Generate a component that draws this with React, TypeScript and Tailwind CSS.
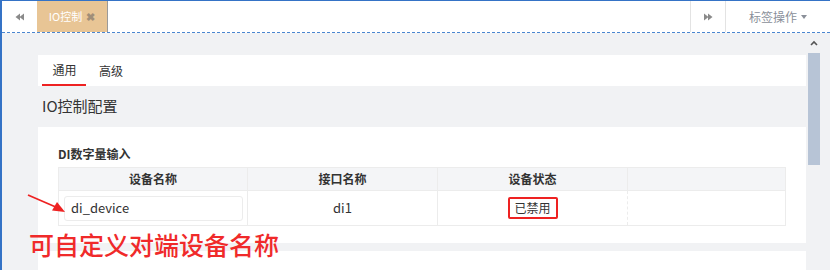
const cjk = { fontFamily: '"Noto Sans CJK SC", "Noto Sans", sans-serif' };

function BackwardIcon() {
  return (
    <svg width="10" height="8" viewBox="0 0 10 8">
      <path d="M0.5 4 L5 0.5 L5 7.5 Z M4.5 4 L9 0.5 L9 7.5 Z" fill="#8a8a8a" />
    </svg>
  );
}

function ForwardIcon() {
  return (
    <svg width="10" height="8" viewBox="0 0 10 8">
      <path d="M9.5 4 L5 0.5 L5 7.5 Z M5.5 4 L1 0.5 L1 7.5 Z" fill="#8a8a8a" />
    </svg>
  );
}

function TopBar() {
  return (
    <div className="flex h-[32px] items-stretch border-b border-dashed border-[#4a86d0] bg-white">
      <button className="flex w-[35px] items-center justify-center">
        <BackwardIcon />
      </button>
      <div className="flex w-[71px] items-center justify-center gap-1 border-r border-[#9a9a9a] bg-[#e8c595] text-[11px] text-white">
        <span>IO控制</span>
        <span className="text-[11px] font-bold text-[#a08e78]">✖</span>
      </div>
      <div className="flex-1" />
      <button className="flex w-[35px] items-center justify-center border-l border-[#e3e3e3]">
        <ForwardIcon />
      </button>
      <button className="flex w-[105px] items-center justify-center gap-1 border-l border-[#e3e3e3] text-[12px] text-[#8a8f99]">
        <span>标签操作</span>
        <span className="mt-[1px] h-0 w-0 border-x-[3px] border-t-[4px] border-x-transparent border-t-[#8a8f99]" />
      </button>
    </div>
  );
}

function Scrollbar() {
  return (
    <div className="flex w-[12px] flex-col items-center">
      <div className="flex h-[20px] w-full items-center justify-center">
        <svg width="8" height="6" viewBox="0 0 8 6">
          <path d="M1 5 L4 2 L7 5" fill="none" stroke="#555" strokeWidth="1.6" />
        </svg>
      </div>
      <div className="h-[112px] w-full bg-[#b7c4d6]" />
      <div className="w-full flex-1 bg-[#e9e9eb]" />
    </div>
  );
}

function DiTable() {
  return (
    <div className="mx-[20px] border border-[#ececec] text-[12px]">
      <div className="grid h-[22px] grid-cols-[189px_190px_190px_1fr] bg-[#f4f5f7] font-bold text-[#333]">
        <div className="flex items-center justify-center border-r border-[#ececec]">设备名称</div>
        <div className="flex items-center justify-center border-r border-[#ececec]">接口名称</div>
        <div className="flex items-center justify-center border-r border-[#ececec]">设备状态</div>
        <div />
      </div>
      <div className="grid h-[35px] grid-cols-[189px_190px_190px_1fr] border-t border-[#ececec] text-[#333]">
        <div className="flex items-center border-r border-[#ececec] pl-[5px] pr-[4px]">
          <div className="flex h-[25px] w-full items-center rounded-[3px] border border-[#ececec] px-[6px] text-[13px]">
            di_device
          </div>
        </div>
        <div className="flex items-center justify-center border-r border-[#ececec] text-[13px]">di1</div>
        <div className="flex items-center justify-center border-r border-dashed border-[#ececec]">
          <span className="flex h-[22px] w-[50px] items-center justify-center rounded-[2px] border-2 border-[#ee2222] text-[12px]">
            已禁用
          </span>
        </div>
        <div />
      </div>
    </div>
  );
}

export default function App() {
  return (
    <div
      className="relative flex h-[270px] w-[830px] flex-col overflow-hidden border-l-2 border-t border-[#3573c6] bg-white"
      style={cjk}
    >
      <TopBar />
      <div className="flex flex-1 bg-[#f1f2f4] pl-[36px] pr-[10px]">
        <div className="flex w-[768px] flex-col pt-[22px]">
          <div className="flex h-[31px] shrink-0 items-stretch bg-white text-[12px] text-[#333]">
            <div className="ml-[4px] flex w-[44px] items-center justify-center border-b-2 border-[#ee2222] pl-[1px] pt-[1px]">通用</div>
            <div className="flex w-[50px] items-center justify-center pt-[1px]">高级</div>
          </div>
          <div className="flex h-[41px] shrink-0 items-center pl-[4px] text-[15px] text-[#333]">IO控制配置</div>
          <div className="h-[116px] shrink-0 bg-white pt-[18px]">
            <div className="mb-[4px] pl-[20px] text-[12px] font-bold text-[#333]">DI数字量输入</div>
            <DiTable />
          </div>
          <div className="h-[8px] shrink-0" />
          <div className="flex-1 bg-white" />
        </div>
        <div className="ml-[2px]">
          <Scrollbar />
        </div>
      </div>

      {/* annotation overlay */}
      <svg className="absolute left-[24px] top-[192px]" width="42" height="22" viewBox="0 0 42 22">
        <line x1="2" y1="2" x2="32" y2="15" stroke="#ee2222" strokeWidth="1.8" />
        <path d="M39 19 L26 17.5 L31 9 Z" fill="#ee2222" />
      </svg>
      <div className="absolute left-[27px] top-[226px] text-[25px] font-medium leading-[34px] text-[#f02a2a]">
        可自定义对端设备名称
      </div>
    </div>
  );
}
